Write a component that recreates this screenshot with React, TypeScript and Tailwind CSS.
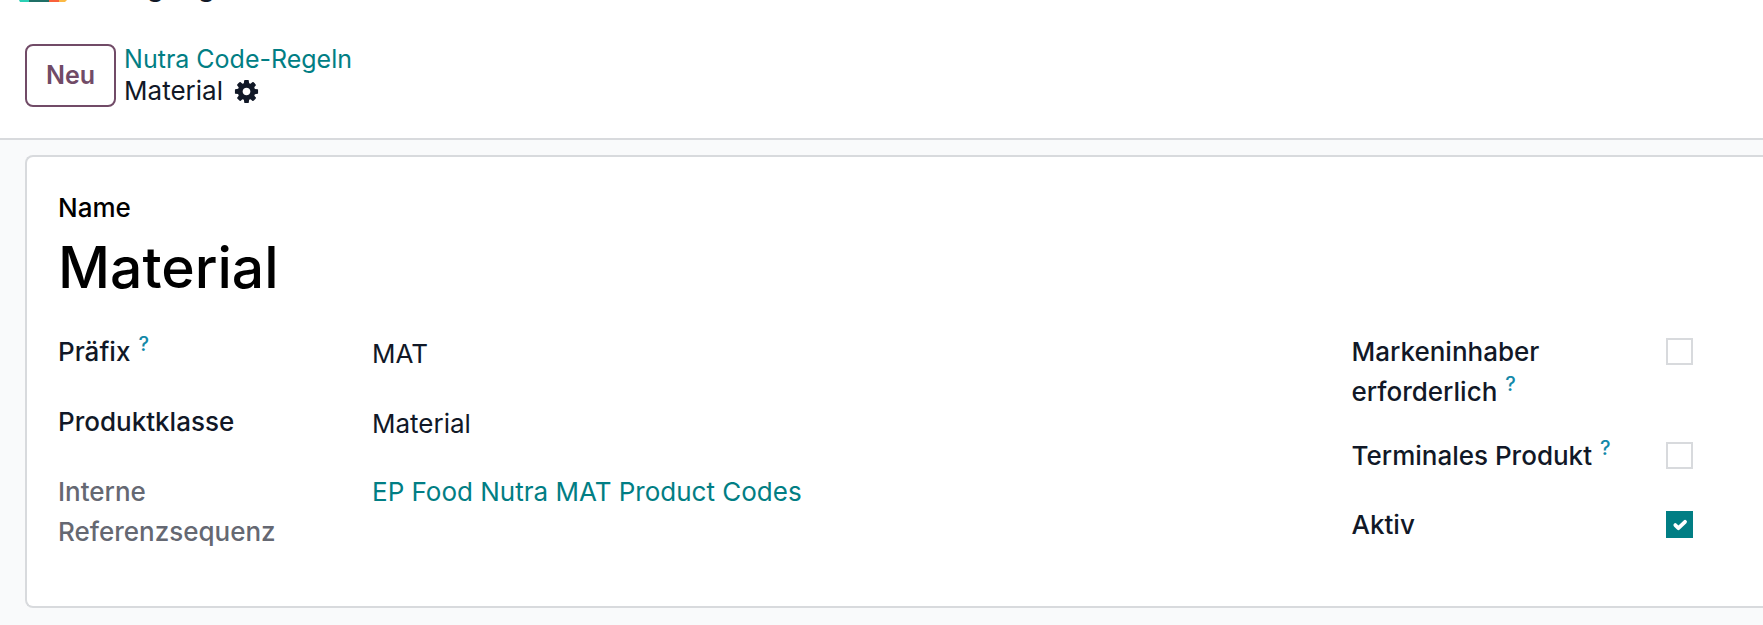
import React from 'react';

interface FieldLabelProps {
  htmlFor: string;
  help?: string;
  muted?: boolean;
  children: React.ReactNode;
}

const FieldLabel: React.FC<FieldLabelProps> = ({ htmlFor, help, muted, children }) => (
  <label
    htmlFor={htmlFor}
    className={`min-h-[45px] pr-10 font-medium leading-10 ${muted ? 'text-[#656872]' : 'text-[#111827]'}`}
  >
    {children}
    {help && (
      <sup title={help} className="-top-[10px] ml-2 text-xl leading-none text-[#1389a9]">?</sup>
    )}
  </label>
);

interface CheckFieldProps {
  id: string;
  defaultChecked?: boolean;
}

const CheckField: React.FC<CheckFieldProps> = ({ id, defaultChecked }) => (
  <span className="mt-[6px] grid h-7">
    <input
      id={id}
      type="checkbox"
      defaultChecked={defaultChecked}
      className="peer col-start-1 row-start-1 size-[27px] appearance-none border-2 border-[#d8dadd] bg-white checked:border-[#017e84] checked:bg-[#017e84]"
    />
    <svg
      viewBox="0 0 20 20"
      className="pointer-events-none invisible col-start-1 row-start-1 size-[27px] peer-checked:visible"
      fill="none"
      stroke="#fff"
      strokeWidth="2.8"
      strokeLinecap="round"
      strokeLinejoin="round"
    >
      <path d="M6.900 10.400l2.300 2.300 4.900-4.700" />
    </svg>
  </span>
);

const CogIcon: React.FC = () => (
  <svg viewBox="0 0 1792 1792" className="size-[27px]" fill="currentColor" aria-hidden="true">
    <path d="M1152 896q0-106-75-181t-181-75-181 75-75 181 75 181 181 75 181-75 75-181zm512-109v222q0 12-8 23t-20 13l-185 28q-19 54-39 91 35 50 107 138 10 12 10 25t-9 23q-27 37-99 108t-94 71q-12 0-26-9l-138-108q-44 23-91 38-16 136-29 186-7 28-36 28h-222q-14 0-24.500-8.500t-11.500-21.500l-28-184q-49-16-90-37l-141 107q-10 9-25 9-14 0-25-11-126-114-165-168-7-10-7-23 0-12 8-23 15-21 51-66.500t54-70.500q-27-50-41-99l-183-27q-13-2-21-12.500t-8-23.500v-222q0-12 8-23t19-13l186-28q14-46 39-92-40-57-107-138-10-12-10-24 0-10 9-23 26-36 98.500-107.500t94.500-71.500q13 0 26 10l138 107q44-23 91-38 16-136 29-186 7-28 36-28h222q14 0 24.500 8.500t11.500 21.500l28 184q49 16 90 37l142-107q9-9 24-9 13 0 25 10 129 119 165 170 7 8 7 22 0 12-8 23-15 21-51 66.500t-54 70.500q26 50 41 98l183 28q13 2 21 12.500t8 23.500z" />
  </svg>
);

const App: React.FC = () => {
  return (
    <div className="min-h-screen overflow-hidden bg-[#f9fafb] font-['Inter',sans-serif] text-[26px] text-[#111827]">
      <header className="border-b-2 border-[#d8dadd] bg-white">
        {/* Lower edge of the scrolled app bar */}
        <div className="mb-[41px] flex h-[2px] items-end gap-5 overflow-hidden pl-[19px]">
          <svg viewBox="0 0 48 2" className="h-[2px] w-12 shrink-0" aria-hidden="true">
            <path d="M0 0h10v2H1z" fill="#2bd0b5" />
            <path d="M10 0h20v2H10z" fill="#1f6f66" />
            <path d="M30 0h10v2H30z" fill="#f9613b" />
            <path d="M40 0h8l-2 2h-6z" fill="#fbb945" />
          </svg>
          <span className="text-[28px] font-medium leading-8">Fertigung</span>
        </div>
        <div className="flex items-center gap-2 pb-[31px] pl-[25px]">
          <button
            type="button"
            className="rounded-lg border-2 border-[#714b67] px-[19px] py-3 text-[25px] font-semibold leading-[35px] text-[#714b67]"
          >
            Neu
          </button>
          <nav className="flex flex-col leading-8">
            <a href="#regeln" className="text-[25px] text-[#017e84]">Nutra Code-Regeln</a>
            <div className="flex items-center gap-[10px]">
              <span>Material</span>
              <button type="button" aria-label="Aktionen">
                <CogIcon />
              </button>
            </div>
          </nav>
        </div>
      </header>

      <main className="pb-4 pl-[25px] pt-[15px]">
        <section className="rounded-l-lg border-2 border-r-0 border-[#d8dadd] bg-white px-[31px] pb-[54px] pt-[31px]">
          <label htmlFor="name" className="block font-medium leading-10 text-black">Name</label>
          <output id="name" className="block text-[57px] font-medium leading-20 text-black">Material</output>

          <div className="mt-6 grid grid-cols-[17fr_5fr]">
            <div className="grid grid-cols-[314px_1fr] content-start gap-y-[25px]">
              <FieldLabel htmlFor="prefix" help="Präfix der Codes">Präfix</FieldLabel>
              <output id="prefix" className="leading-11">MAT</output>
              <FieldLabel htmlFor="klasse">Produktklasse</FieldLabel>
              <output id="klasse" className="leading-11">Material</output>
              <FieldLabel htmlFor="sequenz" muted>Interne Referenzsequenz</FieldLabel>
              <a id="sequenz" href="#sequenz" className="leading-10 text-[#017e84]">EP Food Nutra MAT Product Codes</a>
            </div>
            <div className="grid grid-cols-[314px_1fr] content-start gap-y-6">
              <FieldLabel htmlFor="marke" help="Markeninhaber ist Pflicht">Markeninhaber erforderlich</FieldLabel>
              <CheckField id="marke" />
              <FieldLabel htmlFor="terminal" help="Endprodukt">Terminales Produkt</FieldLabel>
              <CheckField id="terminal" />
              <FieldLabel htmlFor="aktiv">Aktiv</FieldLabel>
              <CheckField id="aktiv" defaultChecked />
            </div>
          </div>
        </section>
      </main>
    </div>
  );
};

export default App;
